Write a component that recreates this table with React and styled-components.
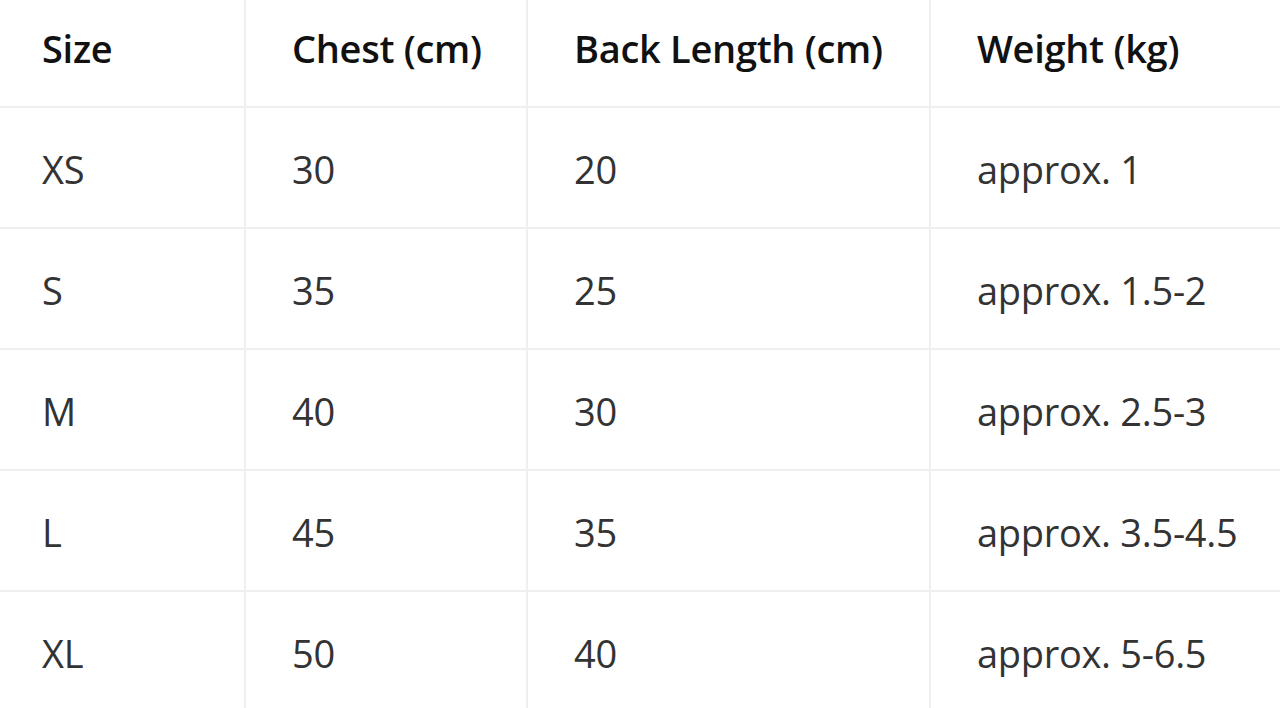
import React from 'react';
import styled, { createGlobalStyle } from 'styled-components';

const GlobalStyle = createGlobalStyle`
  html, body {
    margin: 0;
    padding: 0;
    background: #ffffff;
    overflow: hidden;
  }
`;

const Page = styled.div`
  font-family: 'Open Sans', 'Noto Sans', sans-serif;
  width: 1280px;
  height: 708px;
  overflow: hidden;
  background: #ffffff;
`;

const Table = styled.table`
  border-collapse: collapse;
  table-layout: fixed;
  width: 1284px;
  margin-left: -4px;
`;

const Col = styled.col`
  width: ${(p) => p.$w}px;
`;

const HeadCell = styled.th`
  height: 96px;
  padding: 0 0 10px 46px;
  text-align: left;
  vertical-align: middle;
  font-size: 38px;
  font-weight: 600;
  color: #111111;
  border-right: 2px solid #efefef;
  border-bottom: 2px solid #efefef;
  letter-spacing: -0.3px;
  &:last-child {
    border-right: none;
  }
`;

const Cell = styled.td`
  height: 117px;
  padding: 2px 0 0 46px;
  vertical-align: middle;
  font-size: 38px;
  font-weight: 400;
  color: #333333;
  border-right: 2px solid #efefef;
  border-bottom: 2px solid #efefef;
  letter-spacing: -0.3px;
  &:last-child {
    border-right: none;
  }
`;

const columns = [
  { label: 'Size', width: 249 },
  { label: 'Chest (cm)', width: 282 },
  { label: 'Back Length (cm)', width: 403 },
  { label: 'Weight (kg)', width: 350 },
];

const rows = [
  ['XS', '30', '20', 'approx. 1'],
  ['S', '35', '25', 'approx. 1.5-2'],
  ['M', '40', '30', 'approx. 2.5-3'],
  ['L', '45', '35', 'approx. 3.5-4.5'],
  ['XL', '50', '40', 'approx. 5-6.5'],
];

const App = () => {
  return (
    <>
      <GlobalStyle />
      <Page>
        <Table>
          <colgroup>
            {columns.map((c) => (
              <Col key={c.label} $w={c.width} />
            ))}
          </colgroup>
          <thead>
            <tr>
              {columns.map((c) => (
                <HeadCell key={c.label}>{c.label}</HeadCell>
              ))}
            </tr>
          </thead>
          <tbody>
            {rows.map((r) => (
              <tr key={r[0]}>
                {r.map((v, i) => (
                  <Cell key={i}>{v}</Cell>
                ))}
              </tr>
            ))}
          </tbody>
        </Table>
      </Page>
    </>
  );
};

export default App;
